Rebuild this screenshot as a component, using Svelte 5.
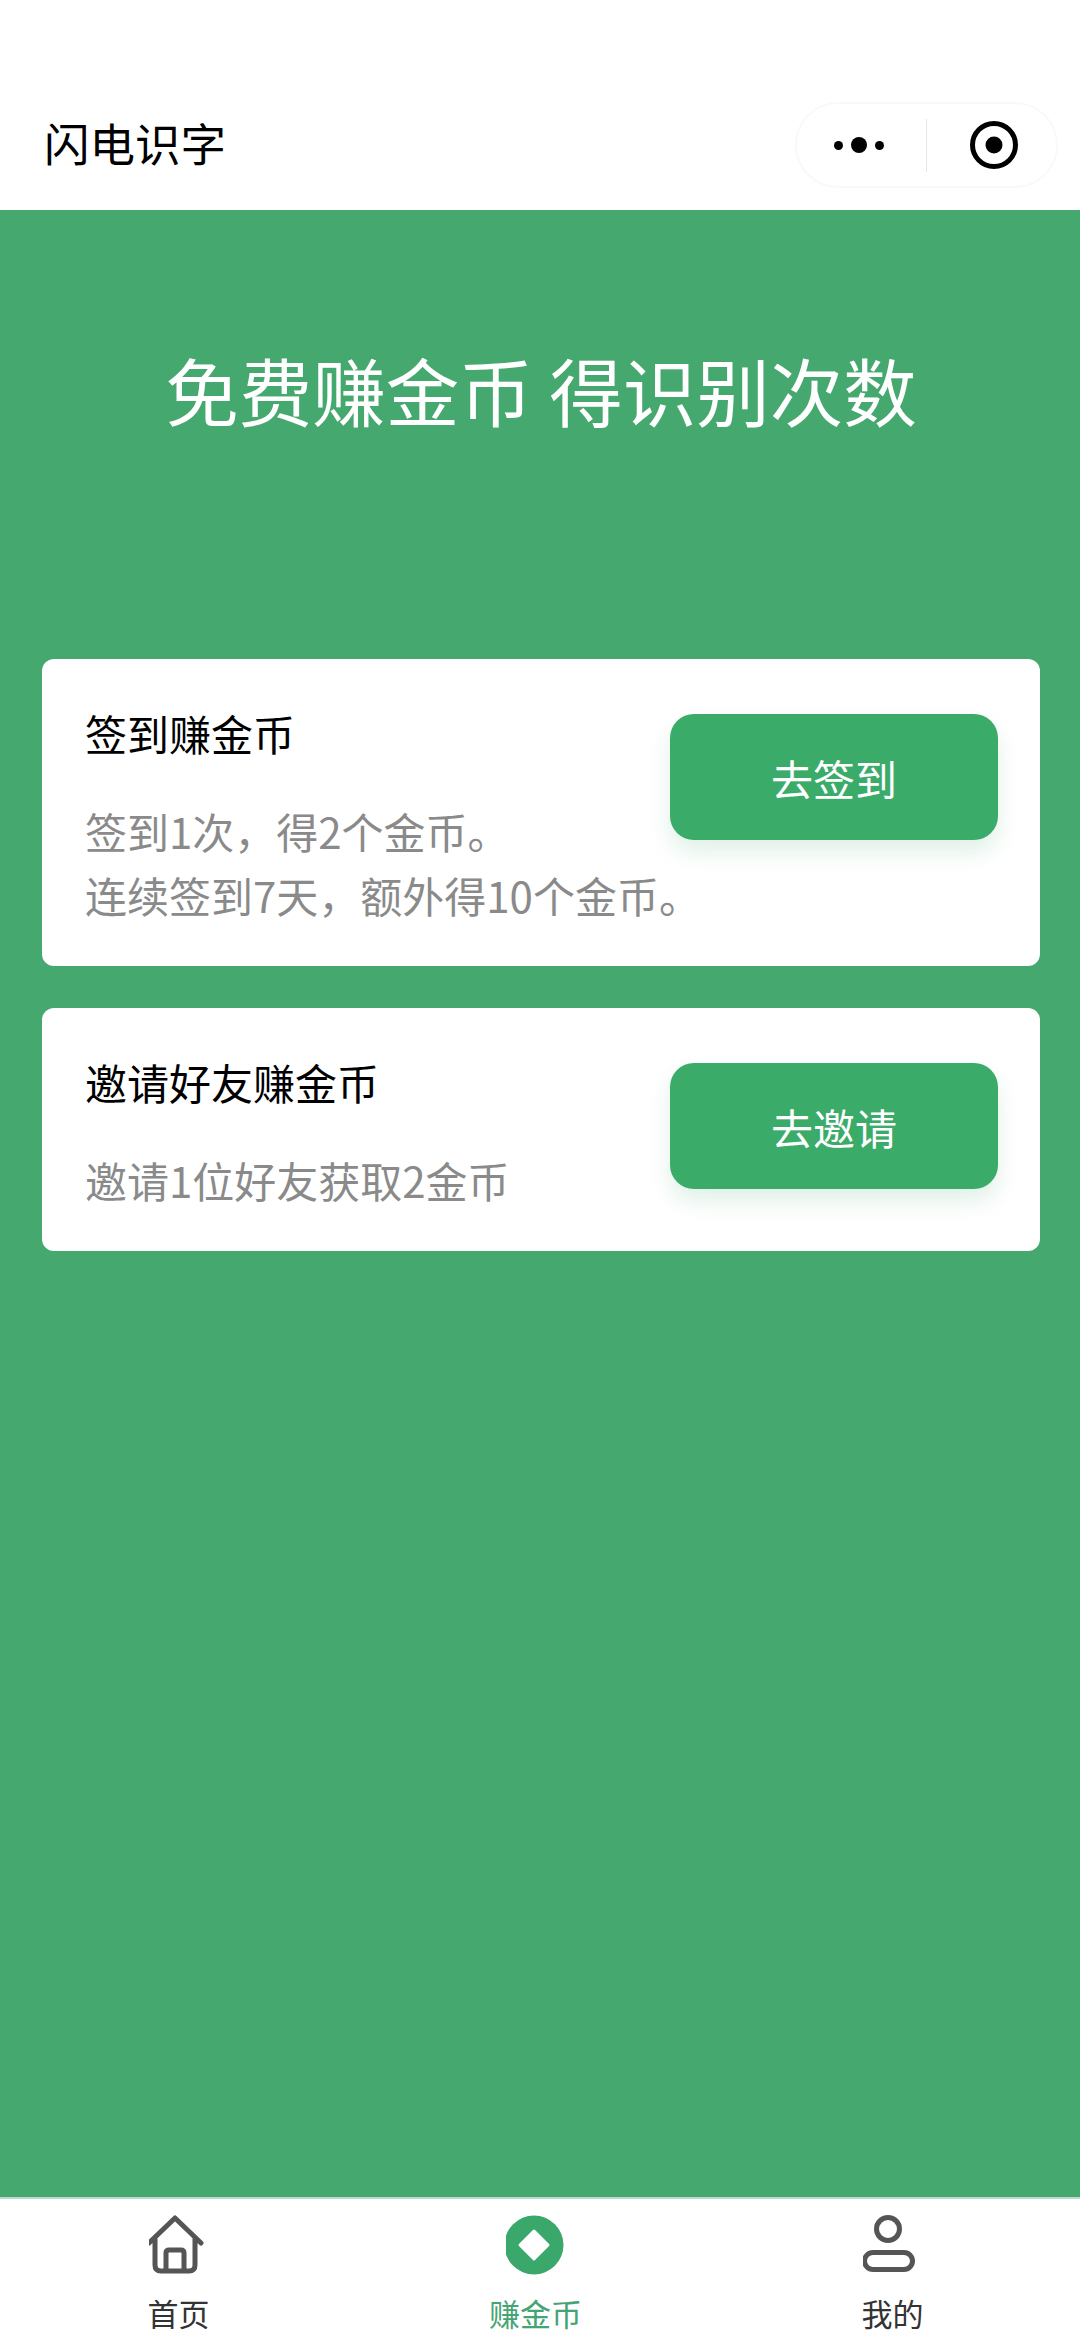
<script>
  const tasks = [
    { title: '签到赚金币', lines: ['签到1次，得2个金币。', '连续签到7天，额外得10个金币。'], action: '去签到' },
    { title: '邀请好友赚金币', lines: ['邀请1位好友获取2金币'], action: '去邀请' }
  ];
</script>

<div class="page">
  <header class="nav">
    <div class="nav-title">闪电识字</div>
    <div class="capsule">
      <div class="more"><i class="dot"></i><i class="dot big"></i><i class="dot"></i></div>
      <div class="sep"></div>
      <svg class="target" width="52" height="52" viewBox="0 0 52 52" aria-hidden="true">
        <circle cx="26" cy="26" r="21.5" fill="none" stroke="#000" stroke-width="5"></circle>
        <circle cx="26" cy="26" r="8.5" fill="#000"></circle>
      </svg>
    </div>
  </header>

  <main class="main">
    <h1 class="headline">免费赚金币 得识别次数</h1>
    <div class="cards">
      {#each tasks as t}
        <section class="card">
          <div class="info">
            <div class="card-title">{t.title}</div>
            <div class="desc">
              {#each t.lines as l}<div class="line">{l}</div>{/each}
            </div>
          </div>
          <button class="go">{t.action}</button>
        </section>
      {/each}
    </div>
  </main>

  <nav class="tabs">
    <div class="tab">
      <svg width="60" height="60" viewBox="0 0 60 60" aria-hidden="true">
        <path d="M0 28 L26 3 L52 28 M6 24 V50 Q6 56 12 56 H40 Q46 56 46 50 V24" fill="none" stroke="#555" stroke-width="5" stroke-linecap="round" stroke-linejoin="round"></path>
        <path d="M17 56 V38 Q17 35 20 35 H32 Q35 35 35 38 V56" fill="none" stroke="#555" stroke-width="5"></path>
      </svg>
      <span>首页</span>
    </div>
    <div class="tab active">
      <svg width="60" height="60" viewBox="0 0 60 60" aria-hidden="true">
        <circle cx="28" cy="30" r="29.5" fill="#3BA86B"></circle>
        <path d="M28 16 L42 30 L28 44 L14 30 Z" fill="#fff" stroke="#fff" stroke-width="3" stroke-linejoin="round"></path>
      </svg>
      <span>赚金币</span>
    </div>
    <div class="tab">
      <svg width="60" height="60" viewBox="0 0 60 60" aria-hidden="true">
        <circle cx="25" cy="14" r="11.5" fill="none" stroke="#555" stroke-width="5"></circle>
        <rect x="1.5" y="37.5" width="48" height="17" rx="8.5" fill="none" stroke="#555" stroke-width="5"></rect>
      </svg>
      <span>我的</span>
    </div>
  </nav>
</div>

<style>
  :global(body) {
    margin: 0;
    background: #fff;
  }
  .page {
    width: 1080px;
    height: 2340px;
    display: flex;
    flex-direction: column;
    font-family: "Noto Sans CJK SC", "Noto Sans", sans-serif;
    overflow: hidden;
  }
  .nav {
    height: 210px;
    flex: none;
    box-sizing: border-box;
    padding: 100px 22px 0 44px;
    background: #fff;
    display: flex;
    justify-content: space-between;
    align-items: flex-start;
  }
  .nav-title {
    font-size: 45.5px;
    line-height: 84px;
    color: #000;
  }
  .capsule {
    width: 263px;
    height: 86px;
    margin-top: 2px;
    box-sizing: border-box;
    border: 2px solid #f9f9f9;
    border-radius: 43px;
    background: #fff;
    display: flex;
    align-items: center;
    padding-left: 37px;
  }
  .more {
    width: 50px;
    display: flex;
    align-items: center;
    justify-content: space-between;
  }
  .dot {
    display: block;
    width: 9px;
    height: 9px;
    border-radius: 50%;
    background: #000;
  }
  .dot.big {
    width: 16px;
    height: 16px;
  }
  .sep {
    width: 1px;
    height: 53px;
    background: #e6e6e6;
    margin-left: 42px;
  }
  .target {
    margin-left: 41px;
  }
  .main {
    flex: 1;
    background: #45a86e;
    padding: 0 40px 0 42px;
    display: flex;
    flex-direction: column;
  }
  .headline {
    margin: 129px 0 0;
    font-size: 73.5px;
    line-height: 100px;
    font-weight: 400;
    color: #fff;
    text-align: center;
    white-space: nowrap;
  }
  .cards {
    margin-top: 220px;
    display: flex;
    flex-direction: column;
    gap: 42px;
  }
  .card {
    background: #fff;
    border-radius: 12px;
    padding: 43px 42px 39px 43px;
    display: flex;
    align-items: flex-start;
    justify-content: space-between;
  }
  .info {
    flex: 1;
    min-width: 0;
    white-space: nowrap;
  }
  .card-title {
    font-size: 42px;
    line-height: 62px;
    color: #000;
  }
  .desc {
    margin-top: 35px;
    font-size: 42px;
    line-height: 64px;
    color: #8a8a8a;
  }
  .go {
    flex: none;
    width: 328px;
    height: 126px;
    margin-top: 12px;
    border: 0;
    border-radius: 24px;
    background: #3bab6a;
    color: #fff;
    font: inherit;
    font-size: 42px;
    box-shadow: 0 12px 22px rgba(60, 170, 106, 0.16);
  }
  .tabs {
    height: 143px;
    flex: none;
    box-sizing: border-box;
    border-top: 2px solid #bfd9d2;
    padding: 16px 9px 0 0;
    background: #fff;
    display: grid;
    grid-template-columns: repeat(3, 1fr);
  }
  .tab {
    display: flex;
    flex-direction: column;
    align-items: center;
    color: #333;
    font-size: 31px;
    line-height: 44px;
  }
  .tab span {
    margin-top: 16px;
  }
  .tab.active {
    color: #45a474;
  }
</style>
